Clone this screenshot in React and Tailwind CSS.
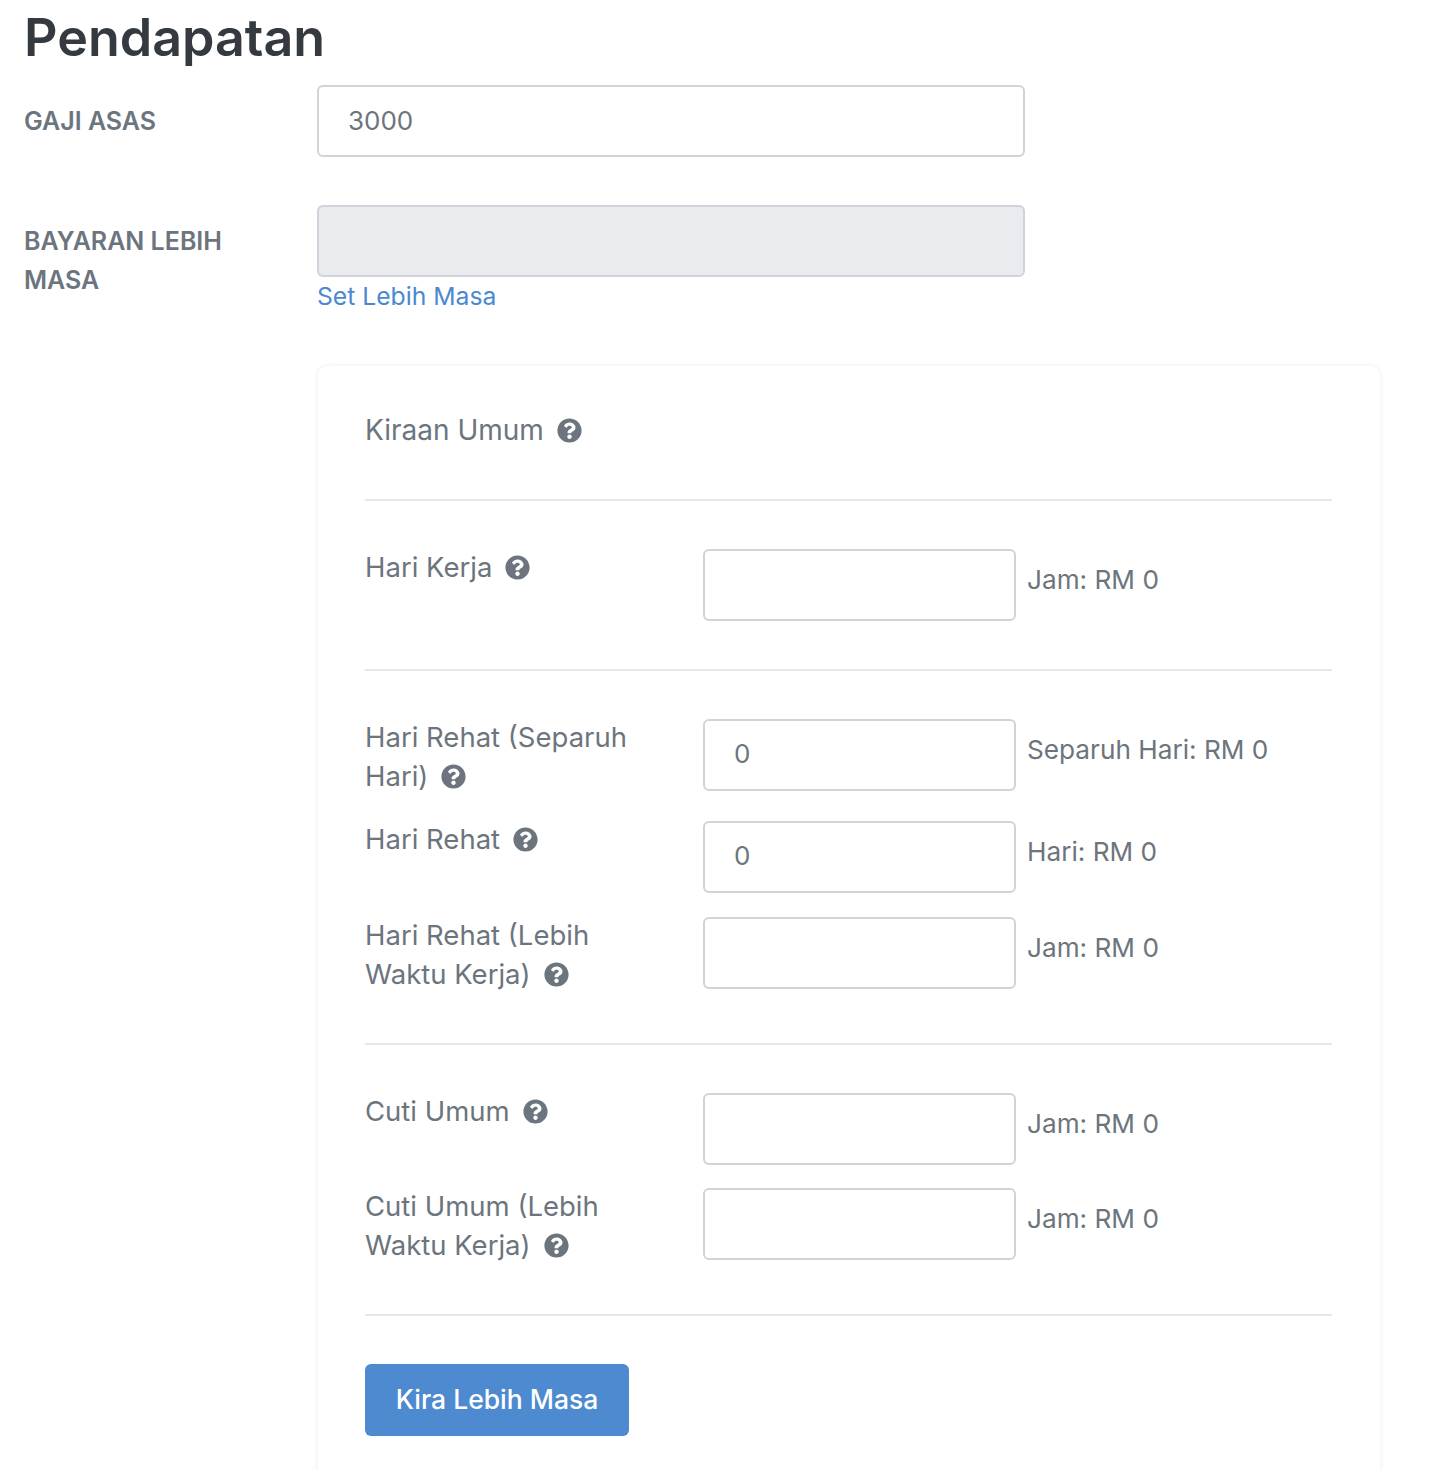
import { FaQuestionCircle } from "react-icons/fa";

function Help() {
    return <FaQuestionCircle className="inline-block ml-[13px] text-[25px] text-[#6c757d] align-[-3px]" />;
}

function Row({ label, value, note, className = "mb-6" }) {
    return (
        <div className={`flex items-start ${className}`}>
            <div className="w-[338px] shrink-0 pr-[60px] pb-px text-[27.5px] leading-[39px] -mt-px">
                {label}
                <Help />
            </div>
            <input
                readOnly
                value={value ?? ""}
                className="w-[313px] h-[72px] px-[29px] pb-[3px] border-2 border-[#ced4da] rounded-md text-[26px] text-[#6c757d] outline-none bg-white"
            />
            {note && <div className="ml-3 pt-[11px] -translate-x-px text-[26.2px] leading-[39px]">{note}</div>}
        </div>
    );
}

export default function App() {
    return (
        <div className="h-[1470px] overflow-hidden bg-white pl-6 text-[#6c757d] font-['Inter','Liberation_Sans',sans-serif]">
            <h1 className="h-[85px] pt-[10px] text-[52px] leading-[56px] font-semibold text-[#343a40]">Pendapatan</h1>

            {/* Gaji asas */}
            <div className="flex items-start mb-12">
                <label className="w-[293px] shrink-0 pt-[17px] text-[25px] leading-[39px] font-semibold uppercase">Gaji Asas</label>
                <input
                    readOnly
                    value="3000"
                    className="w-[708px] h-[72px] px-[29px] pb-[2px] border-2 border-[#ced4da] rounded-md text-[26px] text-[#6c757d] outline-none bg-white"
                />
            </div>

            {/* Bayaran lebih masa */}
            <div className="flex items-start mb-12">
                <label className="w-[293px] shrink-0 pt-[17px] pr-[60px] text-[25px] leading-[39px] font-semibold uppercase">Bayaran Lebih Masa</label>
                <div>
                    <div className="w-[708px] h-[72px] border-2 border-[#ced4da] rounded-md bg-[#eaebee]"></div>
                    <a className="block h-[39px] text-[24.7px] leading-[39px] text-[#4a89d1]">Set Lebih Masa</a>
                </div>
            </div>

            {/* Kiraan */}
            <div className="ml-[292px] w-[1066px] border-2 border-[#f8f8fa] rounded-xl pl-[47px] pr-[48px] pt-[46px] pb-12 shadow-[0_0_4px_rgba(0,0,0,0.03)]">
                <div className="text-[28px] leading-[37px] pb-[2px]">
                    Kiraan Umum
                    <Help />
                </div>
                <hr className="my-12 border-t-2 border-[#e6e6ec]" />

                <Row label="Hari Kerja" note="Jam: RM 0" className="" />
                <hr className="my-12 border-t-2 border-[#e6e6ec]" />

                <Row label="Hari Rehat (Separuh Hari)" value="0" note="Separuh Hari: RM 0" />
                <Row label="Hari Rehat" value="0" note="Hari: RM 0" />
                <Row label="Hari Rehat (Lebih Waktu Kerja)" note="Jam: RM 0" className="" />
                <hr className="my-12 border-t-2 border-[#e6e6ec]" />

                <Row label="Cuti Umum" note="Jam: RM 0" className="mb-[23px]" />
                <Row label="Cuti Umum (Lebih Waktu Kerja)" note="Jam: RM 0" className="" />
                <hr className="my-12 border-t-2 border-[#e6e6ec]" />

                <button className="w-[264px] h-[72px] pb-px rounded-md bg-[#4e8ad0] text-white text-[26.5px] font-medium">Kira Lebih Masa</button>
            </div>
        </div>
    );
}
